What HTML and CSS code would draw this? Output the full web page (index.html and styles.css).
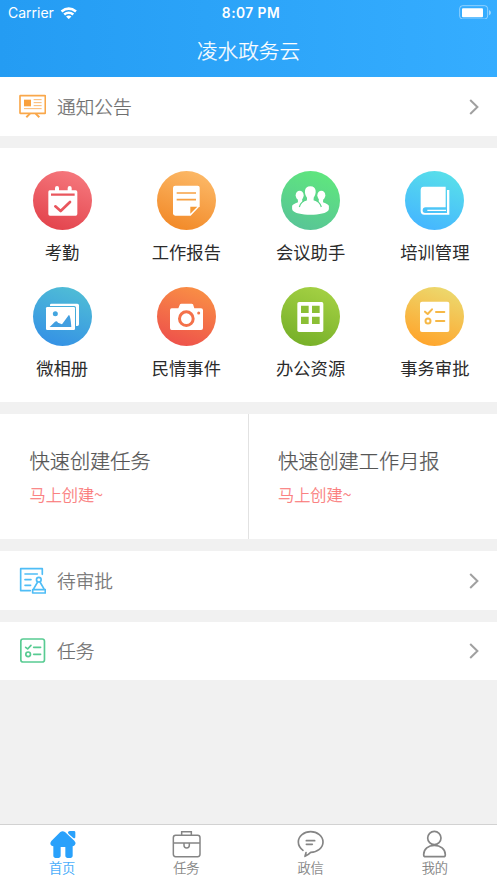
FILE: index.html
```html
<!DOCTYPE html>
<html lang="zh-CN">
<head>
<meta charset="utf-8">
<meta name="viewport" content="width=device-width, initial-scale=1">
<title>凌水政务云</title>
<link rel="stylesheet" href="styles.css">
</head>
<body>
<div class="app">
  <header class="header">
    <div class="status">
      <div class="carrier"><span>Carrier</span>
        <svg class="wifi" viewBox="180 16 52 40"><path d="M182 29q24-18 48 0l-5 6q-19-14-38 0z" fill="#fff"/><path d="M190 38q16-12 32 0l-5 6q-11-8-22 0z" fill="#fff"/><path d="M198 47q8-6 16 0l-8 8z" fill="#fff"/></svg>
      </div>
      <span class="clock">8:07 PM</span>
      <svg class="battery" viewBox="636 14 96 44"><rect x="638" y="16" width="84" height="40" rx="9" fill="none" stroke="#fff" stroke-opacity=".45" stroke-width="3"/><rect x="645" y="24" width="63" height="27" rx="3" fill="#fff"/><path d="M726 29q6 3 6 8t-6 8z" fill="#fff" fill-opacity=".5"/></svg>
    </div>
    <h1 class="title">凌水政务云</h1>
  </header>

  <main class="main">
    <a class="row">
      <svg class="row-icon" viewBox="57 279 82 82"><g fill="none" stroke="#f9a74a" stroke-width="5"><rect x="60" y="287" width="76" height="53" rx="1"/><path d="M90 341l-11 11M107 341l11 11" stroke-width="6"/><path d="M101 299h24M101 308h24M101 317h24M72 326h53" stroke-width="3" stroke="#fbb86f"/></g><rect x="72" y="299" width="21" height="20" fill="#f9a03c"/></svg>
      <span class="row-text">通知公告</span>
      <svg class="chevron" viewBox="0 0 10 16"><path d="M1.2 1l7.2 7-7.2 7"/></svg>
    </a>

    <section class="grid">
      <a class="cell">
        <svg class="disc red" viewBox="99 64 177 177"><path d="M149 122h16v-7q0-6 6-6t6 6v7h26v-7q0-6 6-6t6 6v7h12q5 0 5 5v66q0 5-5 5h-77q-5 0-5-5v-66q0-5 4-5z" fill="#fff"/><g fill="none" stroke="#e9565d"><path d="M153 135h71" stroke-width="7"/><path d="M166 170l16 14 28-27" stroke-width="8" stroke-linecap="round" stroke-linejoin="round"/></g></svg>
        <span>考勤</span>
      </a>
      <a class="cell">
        <svg class="disc orange" viewBox="471 64 177 177"><path d="M526 108h67q6 0 6 6v56l-27 28h-46q-7 0-7-7v-76q0-7 7-7z" fill="#fff"/><path d="M530 130h58M530 150h58" stroke="#f7a143" stroke-width="5"/><path d="M571 171h21l-21 21z" fill="#f59a37"/></svg>
        <span>工作报告</span>
      </a>
      <a class="cell">
        <svg class="disc green" viewBox="102 64 177 177"><g fill="#fff"><ellipse cx="158" cy="137" rx="12" ry="14"/><ellipse cx="223" cy="137" rx="12" ry="14"/><path d="M152 143h13l1 12-2 20-28 4v-10q0-5 17-11zM229 143h-13l-1 12 2 20 28 4v-10q0-5-17-11z"/><path d="M136 168q10-6 32-8h45q22 2 32 8v13c-9 19-100 19-109 0z"/><path d="M190 110c20 0 19 23 10 34v5c3 6 19 5 26 24l-36 12-36-12c7-19 23-18 26-24v-5c-9-11-10-34 10-34z"/></g><path d="M180 150c-10 3-19 7-23 22M200 150c10 3 19 7 23 22" fill="none" stroke="#5bd58a" stroke-width="3.5"/></svg>
        <span>会议助手</span>
      </a>
      <a class="cell">
        <svg class="disc cyan" viewBox="474 64 177 177"><path d="M530 111h66v62h-60q-9 0-9 9t9 8h64v-69h7v74h-75q-11 0-11-11v-63q0-10 9-10z" fill="#fff"/><path d="M541 182h56" stroke="#fff" stroke-width="4"/></svg>
        <span>培训管理</span>
      </a>
      <a class="cell">
        <svg class="disc blue" viewBox="99 51 177 177"><path d="M150 108v-3q0-4 4-4h78q5 0 5 5v57q0 5-5 5h-4v-55q0-5-5-5z" fill="#fff"/><rect x="138" y="111" width="87" height="69" rx="4" fill="#fff"/><circle cx="166" cy="131" r="7.5" fill="#43a5df"/><path d="M149 171l16-16q5-4 9 3l12 5 21-29q5 6 7 37z" fill="#429fe0"/></svg>
        <span>微相册</span>
      </a>
      <a class="cell">
        <svg class="disc coral" viewBox="471 51 177 177"><path d="M515 115h20l5-12q1-2 4-2h31q3 0 4 2l4 12h20q6 0 6 6v53q0 6-6 6h-88q-5 0-5-6v-53q0-6 5-6z" fill="#fff"/><circle cx="559" cy="146" r="20.5" fill="none" stroke="#f4714a" stroke-width="9"/><circle cx="596" cy="129" r="4.5" fill="#f4784a"/></svg>
        <span>民情事件</span>
      </a>
      <a class="cell">
        <svg class="disc lime" viewBox="102 51 177 177"><rect x="151" y="96" width="78" height="90" rx="5" fill="#fff"/><path d="M162 107h23v22h-23zM195 107h23v22h-23zM162 140h23v22h-23zM195 140h23v22h-23z" fill="#8bbf35"/></svg>
        <span>办公资源</span>
      </a>
      <a class="cell">
        <svg class="disc yellow" viewBox="474 51 177 177"><rect x="519" y="95" width="88" height="91" rx="6" fill="#fff"/><g fill="none" stroke="#f6b846" stroke-width="6" stroke-linecap="round" stroke-linejoin="round"><path d="M534 125l8 7 13-14M567 126h25M567 153h25"/><circle cx="543" cy="153" r="7.5"/></g></svg>
        <span>事务审批</span>
      </a>
    </section>

    <section class="quick">
      <a class="quick-card"><strong>快速创建任务</strong><em>马上创建~</em></a>
      <a class="quick-card"><strong>快速创建工作月报</strong><em>马上创建~</em></a>
    </section>

    <a class="row">
      <svg class="row-icon" viewBox="57 81 82 82"><g fill="none" stroke="#4fbdf6" stroke-width="5"><path d="M127 103v-17h-65v66h29M75 102h37M75 119h18M75 136h17" stroke-linecap="round" stroke-linejoin="round"/><circle cx="116.5" cy="119" r="7"/><path d="M113 126l-13 22M120 126l13 22M98 149h38v10h-38z" stroke-linejoin="round"/></g></svg>
      <span class="row-text">待审批</span>
      <svg class="chevron" viewBox="0 0 10 16"><path d="M1.2 1l7.2 7-7.2 7"/></svg>
    </a>
    <a class="row">
      <svg class="row-icon" viewBox="57 292 82 82"><g fill="none" stroke="#58cb92" stroke-width="5" stroke-linecap="round" stroke-linejoin="round"><rect x="62.5" y="298" width="71" height="69" rx="7"/><path d="M77 323l6 5 10-11M101 323h21M101 344h21"/><circle cx="84.5" cy="344" r="7"/></g></svg>
      <span class="row-text">任务</span>
      <svg class="chevron" viewBox="0 0 10 16"><path d="M1.2 1l7.2 7-7.2 7"/></svg>
    </a>
  </main>

  <nav class="tabs">
    <a class="tab active">
      <svg class="tab-icon" viewBox="144 42 87 84"><path d="M181 48q7-5 14 0l28 26q6 6 2 12-2 3-7 5v28q0 7-11 7t-11-7v-26h-14v26q0 7-11 7t-11-7v-28q-6-2-8-5-3-5 2-11zM209 45h13q4 0 4 4v13q0 8-7 3l-12-10q-7-7 2-10z" fill="#29a1fb"/></svg>
      <span>首页</span>
    </a>
    <a class="tab">
      <svg class="tab-icon" viewBox="517 42 87 84"><g fill="none" stroke="#858585" stroke-width="4.5"><rect x="521" y="58" width="80" height="64" rx="7"/><path d="M546 58v-11h29v11M521 81h80M553 82v6q0 8 8 8t8-8v-6"/></g></svg>
      <span>任务</span>
    </a>
    <a class="tab">
      <svg class="tab-icon" viewBox="147 42 87 84"><g fill="none" stroke="#858585" stroke-width="5" stroke-linecap="round" stroke-linejoin="round"><path d="M168 103c-8-6-14-14-14-25 0-18 17-31 37-31s37 13 37 31-17 31-37 31q-8 8-17 12l3-11M178 74h25M178 85h18"/></g></svg>
      <span>政信</span>
    </a>
    <a class="tab">
      <svg class="tab-icon" viewBox="519 42 87 84"><g fill="none" stroke="#858585" stroke-width="5"><circle cx="562" cy="66" r="20"/><path d="M562 88c-18 0-32 11-32 28q0 6 6 6h53q6 0 6-6c0-17-15-28-33-28z"/></g></svg>
      <span>我的</span>
    </a>
  </nav>
</div>
</body>
</html>
```
FILE: styles.css
```css
* { box-sizing: border-box; }
body {
  margin: 0;
  background: #f1f1f1;
  font-family: "Noto Sans CJK SC", "Noto Sans", sans-serif;
  font-weight: 300;
}
.app { height: 883px; display: flex; flex-direction: column; overflow: hidden; }
svg { display: block; flex: none; }

.header {
  height: 77.4px;
  flex: none;
  background: linear-gradient(90deg, #249cf3, #35adff);
  color: #fff;
}
.status {
  height: 26px;
  padding: 0 7px 0 8px;
  display: grid;
  grid-template-columns: 1fr auto 1fr;
  align-items: center;
  font: 400 14.2px/26px Inter, sans-serif;
}
.carrier { display: flex; align-items: center; gap: 6px; font-weight: 400; font-size: 14px; }
.wifi { width: 17.5px; height: 13.5px; margin-top: -1px; }
.clock { font-weight: 600; font-size: 13.8px; letter-spacing: .45px; padding-left: 4px; }
.battery { width: 32px; height: 14.7px; justify-self: end; margin-right: -1px; margin-top: -2px; }
.title {
  margin: 0;
  font-size: 20.6px;
  font-weight: 300;
  line-height: 49px;
  text-align: center;
  -webkit-text-stroke: .25px;
}

.main { flex: 1; display: flex; flex-direction: column; gap: 12px; }
.row {
  height: 58.4px;
  padding: 0 18px 0 19px;
  display: flex;
  align-items: center;
  background: #fff;
}
.row-icon { width: 27.3px; height: 27.3px; margin-right: 10.7px; }
.row-text {
  flex: 1;
  padding-bottom: 2px;
  font-size: 18.7px;
  line-height: 28px;
  color: #6f6f6f;
  -webkit-text-stroke: .25px;
}
.chevron { width: 10px; height: 16px; }
.chevron path { fill: none; stroke: #a0a0a0; stroke-width: 2; }

.grid {
  height: 254.6px;
  padding-top: 23.6px;
  display: grid;
  grid-template-columns: repeat(4, 1fr);
  grid-auto-rows: 115.6px;
  background: #fff;
}
.cell {
  display: flex;
  flex-direction: column;
  align-items: center;
  gap: 9px;
  font-size: 17.3px;
  line-height: 26px;
  font-weight: 400;
  color: #2b2b2b;
}
.disc { width: 59px; height: 59px; border-radius: 50%; }
.red { background: linear-gradient(200deg, #f5777c 10%, #e3444d 90%); }
.orange { background: linear-gradient(200deg, #fcb866 10%, #f28a29 90%); }
.green { background: linear-gradient(200deg, #5fe67e 10%, #58c596 90%); }
.cyan { background: linear-gradient(200deg, #58dfea 10%, #45b6ff 90%); }
.blue { background: linear-gradient(200deg, #4fbcd6 10%, #3592e5 90%); }
.coral { background: linear-gradient(200deg, #f98e45 10%, #ee524b 90%); }
.lime { background: linear-gradient(200deg, #a3d043 10%, #77b029 90%); }
.yellow { background: linear-gradient(200deg, #ecd86d 10%, #ffa52c 90%); }

.quick { height: 125px; display: grid; grid-template-columns: 1fr 1fr; background: #fff; }
.quick-card {
  padding: 32px 0 0 29.5px;
  display: flex;
  flex-direction: column;
  gap: 6px;
  -webkit-text-stroke: .25px;
}
.quick-card:first-child { border-right: 1px solid #e2e2e2; }
.quick-card strong { font-size: 20.2px; line-height: 30px; font-weight: 300; color: #555; }
.quick-card em { font-size: 16.2px; line-height: 24px; font-style: normal; color: #fa7878; }

.tabs {
  height: 59.5px;
  flex: none;
  border-top: 1px solid #d2d2d2;
  background: #fff;
  display: grid;
  grid-template-columns: repeat(4, 1fr);
}
.tab {
  padding-top: 5px;
  display: flex;
  flex-direction: column;
  align-items: center;
  font-size: 13.2px;
  line-height: 20px;
  color: #7b7b7b;
  -webkit-text-stroke: .2px;
}
.tab-icon { width: 29px; height: 28px; }
.active { color: #29a1fb; }
```
